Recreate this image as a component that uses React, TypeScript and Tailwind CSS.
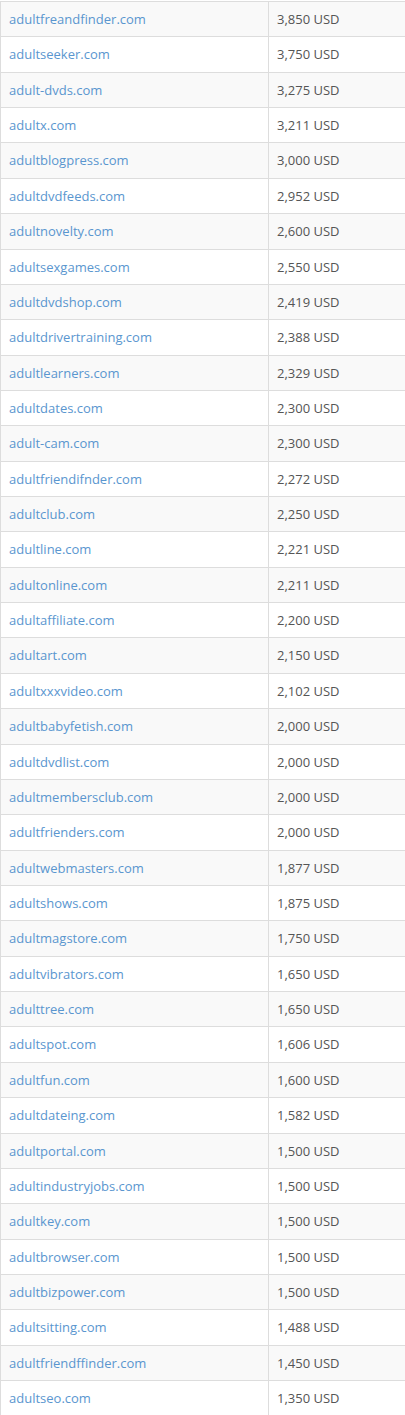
import React from "react";

const rows: [string, string][] = [
	["adultfreandfinder.com", "3,850"],
	["adultseeker.com", "3,750"],
	["adult-dvds.com", "3,275"],
	["adultx.com", "3,211"],
	["adultblogpress.com", "3,000"],
	["adultdvdfeeds.com", "2,952"],
	["adultnovelty.com", "2,600"],
	["adultsexgames.com", "2,550"],
	["adultdvdshop.com", "2,419"],
	["adultdrivertraining.com", "2,388"],
	["adultlearners.com", "2,329"],
	["adultdates.com", "2,300"],
	["adult-cam.com", "2,300"],
	["adultfriendifnder.com", "2,272"],
	["adultclub.com", "2,250"],
	["adultline.com", "2,221"],
	["adultonline.com", "2,211"],
	["adultaffiliate.com", "2,200"],
	["adultart.com", "2,150"],
	["adultxxxvideo.com", "2,102"],
	["adultbabyfetish.com", "2,000"],
	["adultdvdlist.com", "2,000"],
	["adultmembersclub.com", "2,000"],
	["adultfrienders.com", "2,000"],
	["adultwebmasters.com", "1,877"],
	["adultshows.com", "1,875"],
	["adultmagstore.com", "1,750"],
	["adultvibrators.com", "1,650"],
	["adulttree.com", "1,650"],
	["adultspot.com", "1,606"],
	["adultfun.com", "1,600"],
	["adultdateing.com", "1,582"],
	["adultportal.com", "1,500"],
	["adultindustryjobs.com", "1,500"],
	["adultkey.com", "1,500"],
	["adultbrowser.com", "1,500"],
	["adultbizpower.com", "1,500"],
	["adultsitting.com", "1,488"],
	["adultfriendffinder.com", "1,450"],
	["adultseo.com", "1,350"],
];

export default function App() {
	return (
		<div className="w-[405px] overflow-hidden bg-white pt-px" style={{ fontFamily: "'Open Sans', sans-serif" }}>
			<div className="border-t border-l border-[#dddddd] w-[420px]">
				{rows.map(([domain, price], i) => (
					<div
						key={domain}
						className={`flex border-b border-[#dddddd] text-[13px] leading-[18.36px] ${i % 2 === 0 ? "bg-[#f9f9f9]" : "bg-white"}`}>
						<div className="w-[268px] shrink-0 px-2 py-2 border-r border-[#dddddd]">
							<a href="#" className="text-[#5a96cf]">
								{domain}
							</a>
						</div>
						<div className="flex-1 px-2 py-2 text-[#555555]">{price} USD</div>
					</div>
				))}
			</div>
		</div>
	);
}
